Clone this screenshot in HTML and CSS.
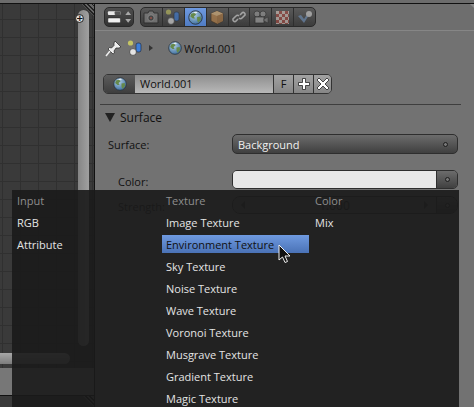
FILE: index.html
```html
<!DOCTYPE html>
<html lang="en">
<head>
	<meta charset="UTF-8">
	<title>World nodes</title>
	<link rel="stylesheet" href="styles.css">
</head>
<body>
	<svg class="defs" width="0" height="0">
		<defs>
			<radialGradient id="sea" cx="40%" cy="30%" r="75%">
				<stop offset="0" stop-color="#b4d0e4"/>
				<stop offset="1" stop-color="#3a6c9e"/>
			</radialGradient>
			<symbol id="globe" viewBox="0 0 14 14">
				<circle cx="7" cy="7" r="6.3" fill="url(#sea)" stroke="#2a323a" stroke-width=".8"/>
				<path d="M3 3.500 6.500 2.500 7.500 4.500 5.500 6 6.500 8 4.500 8 2.200 6ZM8.500 6.500 11.800 6 12 9 9.500 12 8.500 9.500Z" fill="#66894a"/>
				<path d="M5 2.200 8 1.600 9 2.600 6.500 3.200Z" fill="#e8eef2"/>
			</symbol>
			<symbol id="scene" viewBox="0 0 16 16">
				<circle cx="3.500" cy="3" r="2.600" fill="#d8d860" opacity=".8"/>
				<rect x="9" y="3" width="5" height="9" rx="2" fill="#3f7fd8" stroke="#16243a" stroke-width=".6"/>
				<circle cx="6" cy="12" r="3.400" fill="#e4e4e4" stroke="#222" stroke-width=".6"/>
			</symbol>
		</defs>
	</svg>

	<div class="top-strip"></div>

	<div class="main">
		<div class="node-editor">
			<div class="grid"></div>
			<div class="hatch"></div>
			<div class="add-btn">+</div>
			<div class="v-scroll"></div>
			<div class="h-scroll"></div>
			<div class="bottom-bar"></div>
			<div class="hatch-bottom"></div>
		</div>

		<div class="props">
			<div class="hatch-small"></div>
			<div class="tabs-bar">
				<div class="editor-switch">
					<svg width="29" height="18" viewBox="0 0 29 18">
						<rect x="3" y="3" width="13" height="4" rx="1" fill="#e8e8e8"/>
						<rect x="10" y="3" width="6" height="4" rx="1" fill="#555"/>
						<rect x="3" y="10" width="13" height="5" rx="1" fill="#f0f0f0" stroke="#222" stroke-width=".5"/>
						<path d="M21 7 24 3 27 7ZM21 11 24 15 27 11Z" fill="#a8a8a8"/>
					</svg>
				</div>
				<div class="tabs">
					<div class="tab">
						<svg width="16" height="14" viewBox="0 0 16 14">
							<path d="M1 3H5L6 1H10L11 3H15V13H1Z" fill="#8a8a8a" stroke="#222"/>
							<circle cx="8" cy="8" r="3.200" fill="#444" stroke="#bbb" stroke-width=".8"/>
							<circle cx="8" cy="8" r="1" fill="#c85a4a"/>
						</svg>
					</div>
					<div class="tab"><svg width="16" height="16"><use href="#scene"/></svg></div>
					<div class="tab tab-active"><svg width="15" height="15"><use href="#globe"/></svg></div>
					<div class="tab">
						<svg width="14" height="15" viewBox="0 0 14 15">
							<path d="M7 1 13 3.500V11L7 14 1 11V3.500Z" fill="#c48a4c" stroke="#3a2a18" stroke-width=".7"/>
							<path d="M1 3.500 7 6 13 3.500 7 1Z" fill="#e6bc84"/>
							<path d="M7 6V14L13 11V3.500Z" fill="#b07a42"/>
						</svg>
					</div>
					<div class="tab">
						<svg width="16" height="14" viewBox="0 0 16 14" fill="none">
							<path d="M7 9 4.500 11.500A2 2 0 0 1 2 9L5 6A2 2 0 0 1 8 6M9 5 11.500 2.500A2 2 0 0 1 14 5L11 8A2 2 0 0 1 8 8" stroke="#d8d8d8" stroke-width="1.600"/>
						</svg>
					</div>
					<div class="tab">
						<svg width="17" height="15" viewBox="0 0 17 15">
							<circle cx="5" cy="4" r="3" fill="#999" stroke="#222" stroke-width=".7"/>
							<circle cx="11" cy="4" r="3" fill="#999" stroke="#222" stroke-width=".7"/>
							<rect x="3" y="7" width="9" height="6" fill="#aaa" stroke="#222" stroke-width=".7"/>
							<path d="M12 9 16 7V13L12 11Z" fill="#888" stroke="#222" stroke-width=".5"/>
						</svg>
					</div>
					<div class="tab"><div class="checker"></div></div>
					<div class="tab">
						<svg width="16" height="15" viewBox="0 0 16 15">
							<path d="M1 6 4 5 7 9 11 3 12 5 7 13Z" fill="#6f90b8"/>
							<circle cx="12" cy="4" r="3" fill="#d0d0d0"/>
						</svg>
					</div>
				</div>
			</div>

			<div class="context">
				<svg width="17" height="17" viewBox="0 0 17 17">
					<path d="M10 1 16 7 14 8 11 8 9 11 9.500 13 8 14 3 9 4.500 7.500 6.500 8 9 5.500 9 3Z" fill="#eee" stroke="#222" stroke-width=".7"/>
					<path d="M5 11 1 16" stroke="#eee" stroke-width="1.500"/>
				</svg>
				<svg class="scene-icon" width="16" height="16"><use href="#scene"/></svg>
				<span class="crumb-arrow"></span>
				<svg class="crumb-globe" width="14" height="14"><use href="#globe"/></svg>
				<span class="crumb-text">World.001</span>
			</div>

			<div class="datablock">
				<div class="db-icon"><svg width="14" height="14"><use href="#globe"/></svg></div>
				<div class="db-name">World.001</div>
				<div class="db-btn">F</div>
				<div class="db-btn db-sign">
					<svg width="14" height="14" viewBox="0 0 14 14"><path d="M5.500 1.500H8.500V5.500H12.500V8.500H8.500V12.500H5.500V8.500H1.500V5.500H5.500Z" fill="#fff" stroke="#222" stroke-width=".8"/></svg>
				</div>
				<div class="db-btn db-sign db-last">
					<svg width="14" height="14" viewBox="0 0 14 14"><path d="M3 1 7 5 11 1 13 3 9 7 13 11 11 13 7 9 3 13 1 11 5 7 1 3Z" fill="#fff" stroke="#222" stroke-width=".8"/></svg>
				</div>
			</div>

			<div class="panel-line"></div>

			<div class="panel-head">
				<span class="panel-arrow"></span>
				<span>Surface</span>
			</div>

			<div class="row row-surface">
				<div class="label">Surface:</div>
				<div class="dropdown">
					<span>Background</span>
					<span class="socket"></span>
				</div>
			</div>

			<div class="row row-color">
				<div class="label label-in">Color:</div>
				<div class="color-field">
					<div class="swatch"></div>
					<div class="swatch-btn"><span class="socket"></span></div>
				</div>
			</div>

			<div class="row row-strength">
				<div class="label label-in">Strength:</div>
				<div class="color-field slider-field">
					<div class="slider">
						<span class="slider-arrow"></span>
						<span>1.000</span>
						<span class="slider-arrow slider-arrow-r"></span>
					</div>
					<div class="swatch-btn"><span class="socket"></span></div>
				</div>
			</div>
		</div>
	</div>

	<div class="menu">
		<ul class="menu-col">
			<li class="menu-title">Input</li>
			<li>RGB</li>
			<li>Attribute</li>
		</ul>
		<ul class="menu-col">
			<li class="menu-title">Texture</li>
			<li>Image Texture</li>
			<li class="menu-on">Environment Texture</li>
			<li>Sky Texture</li>
			<li>Noise Texture</li>
			<li>Wave Texture</li>
			<li>Voronoi Texture</li>
			<li>Musgrave Texture</li>
			<li>Gradient Texture</li>
			<li>Magic Texture</li>
		</ul>
		<ul class="menu-col">
			<li class="menu-title">Color</li>
			<li>Mix</li>
		</ul>
	</div>

	<svg class="cursor" width="14" height="20" viewBox="0 0 14 20">
		<path d="M1 1V16L4.500 13 7 18.500 9.500 17.500 7 12H12Z" fill="#111" stroke="#eee" stroke-width="1"/>
	</svg>
</body>
</html>
```

FILE: styles.css
```css
*{
	margin: 0;
	padding: 0;
	box-sizing: border-box;
}
html, body{
	width: 474px;
	height: 407px;
	overflow: hidden;
}
body{
	position: relative;
	background: #727272;
	font-family: "Open Sans", "Noto Sans", sans-serif;
	font-size: 11px;
	color: #111;
}
ul{
	list-style-type: none;
}
.defs{
	position: absolute;
}

.top-strip{
	height: 4px;
	background: #6c6c6c;
	border-bottom: 1px solid #111;
}
.main{
	display: flex;
	height: 403px;
}

/* node editor on the left */
.node-editor{
	position: relative;
	width: 95px;
	display: flex;
	flex-direction: column;
	background: #3a3a3a;
	border-right: 1px solid #111;
}
.grid{
	flex: 1;
	background-image:
		linear-gradient(#303030 1px, transparent 1px),
		linear-gradient(90deg, #303030 1px, transparent 1px);
	background-size: 18px 18px;
	background-position: 2px 15px;
}
.bottom-bar{
	height: 28px;
	margin-bottom: 11px;
	background: #777;
	border-bottom: 1px solid #111;
}
.hatch{
	position: absolute;
	right: 0;
	top: 0;
	width: 12px;
	height: 12px;
	background: repeating-linear-gradient(45deg, #222 0 1px, #666 1px 3px);
	clip-path: polygon(0 0, 100% 0, 100% 100%);
}
.hatch-bottom{
	position: absolute;
	right: 0;
	bottom: 0;
	width: 11px;
	height: 11px;
	background: repeating-linear-gradient(45deg, #111 0 1px, #666 1px 3px);
	clip-path: polygon(0 0, 100% 0, 100% 100%);
}
.v-scroll{
	position: absolute;
	left: 78px;
	top: 6px;
	width: 11px;
	height: 336px;
	border-radius: 6px;
	background: linear-gradient(90deg, #858585, #a0a0a0);
}
.h-scroll{
	position: absolute;
	left: -10px;
	top: 349px;
	width: 80px;
	height: 11px;
	border-radius: 6px;
	background: linear-gradient(#a8a8a8, #7c7c7c);
}
.add-btn{
	position: absolute;
	left: 75px;
	top: 10px;
	width: 9px;
	height: 9px;
	border-radius: 50%;
	background: #ddd;
	border: 1px solid #222;
	z-index: 1;
	font: bold 9px/7px "DejaVu Sans", sans-serif;
	text-align: center;
	color: #111;
}

/* properties editor */
.props{
	position: relative;
	flex: 1;
	background: #727272;
}
.hatch-small{
	position: absolute;
	right: 0;
	top: 0;
	width: 4px;
	height: 4px;
	background: #8a8a8a;
	clip-path: polygon(0 0, 100% 100%, 100% 0);
}
.tabs-bar{
	display: flex;
	height: 27px;
	padding: 3px 0 0 9px;
	background: #6e6e6e;
	border-bottom: 1px solid #868686;
}
.editor-switch{
	width: 30px;
	height: 20px;
	border-radius: 5px;
	background: linear-gradient(#4e4e4e, #333);
	border: 1px solid #2a2a2a;
	display: flex;
}
.tabs{
	display: flex;
	width: 176px;
	margin-left: 6px;
	height: 20px;
	border: 1px solid #2a2a2a;
	border-radius: 5px;
	background: linear-gradient(#5a5a5a, #3c3c3c);
	overflow: hidden;
}
.tab{
	flex: 1;
	display: flex;
	align-items: center;
	justify-content: center;
	border-right: 1px solid #2e2e2e;
}
.tab:last-child{
	border-right: 0;
}
.tab svg, .checker{
	opacity: .62;
}
.tab-active{
	background: linear-gradient(#6f9ae0, #4f7cc4);
}
.tab-active svg{
	opacity: 1;
}
.checker{
	width: 13px;
	height: 13px;
	background: repeating-conic-gradient(#a84a42 0 25%, #d8c8c0 0 50%) 0 0 / 6px 6px;
}

.context{
	display: flex;
	align-items: center;
	height: 34px;
	padding-left: 10px;
}
.scene-icon{
	margin-left: 5px;
}
.crumb-arrow{
	width: 0;
	height: 0;
	margin-left: 6px;
	border-left: 4px solid #333;
	border-top: 3px solid transparent;
	border-bottom: 3px solid transparent;
}
.crumb-globe{
	margin-left: 15px;
}
.crumb-text{
	margin-left: 2px;
}

.datablock{
	display: flex;
	height: 20px;
	width: 229px;
	margin: 9px 0 0 8px;
	border: 1px solid #333;
	border-radius: 5px;
	overflow: hidden;
}
.db-icon{
	width: 31px;
	display: flex;
	align-items: center;
	justify-content: center;
	background: linear-gradient(#5c5c5c, #3e3e3e);
}
.db-name{
	width: 138px;
	padding-left: 5px;
	line-height: 18px;
	background: linear-gradient(#8e8e8e, #b8b8b8);
}
.db-btn{
	width: 20px;
	text-align: center;
	line-height: 18px;
	border-left: 1px solid #333;
	background: linear-gradient(#a2a2a2, #868686);
}
.db-sign{
	display: flex;
	align-items: center;
	justify-content: center;
}
.db-last{
	flex: 1;
}

.panel-line{
	height: 1px;
	width: 361px;
	margin: 10px 0 0 5px;
	background: #3e3e3e;
}
.panel-head{
	display: flex;
	align-items: center;
	height: 24px;
	padding-left: 10px;
	font-size: 12px;
}
.panel-arrow{
	width: 0;
	height: 0;
	margin-right: 5px;
	border-top: 9px solid #222;
	border-left: 5px solid transparent;
	border-right: 5px solid transparent;
}

.row{
	display: grid;
	grid-template-columns: 124px 226px;
	align-items: center;
	padding-left: 13px;
}
.row-surface{
	height: 20px;
	margin-top: 5px;
}
.row-color{
	height: 19px;
	margin-top: 16px;
}
.row-color .label{
	padding-top: 4px;
}
.row-strength{
	height: 18px;
	margin-top: 7px;
}
.row-strength .label{
	padding-top: 2px;
}
.label-in{
	padding-left: 10px;
}
.socket{
	width: 5px;
	height: 5px;
	border-radius: 50%;
	background: #777;
	border: 1px solid #1c1c1c;
}
.dropdown{
	display: flex;
	align-items: center;
	justify-content: space-between;
	height: 20px;
	padding: 0 9px 0 5px;
	border: 1px solid #2e2e2e;
	border-radius: 5px;
	background: linear-gradient(#6c6c6c, #3f3f3f);
	color: #f0f0f0;
}
.color-field{
	display: flex;
	height: 19px;
	border: 1px solid #2e2e2e;
	border-radius: 5px;
	overflow: hidden;
}
.swatch{
	flex: 1;
	background: #e8e8e8;
}
.swatch-btn{
	width: 21px;
	display: flex;
	align-items: center;
	justify-content: center;
	border-left: 1px solid #2e2e2e;
	background: linear-gradient(#6c6c6c, #404040);
}
.slider-field{
	height: 18px;
	border-radius: 8px;
}
.slider{
	flex: 1;
	display: flex;
	align-items: center;
	justify-content: space-between;
	padding: 0 8px;
	background: #606060;
	font-size: 12px;
}
.slider-arrow{
	width: 0;
	height: 0;
	border-right: 4px solid #333;
	border-top: 4px solid transparent;
	border-bottom: 4px solid transparent;
}
.slider-arrow-r{
	border-right: 0;
	border-left: 4px solid #333;
}

/* add-node popup, sits over both editors */
.menu{
	position: absolute;
	left: 12px;
	top: 190px;
	width: 447px;
	height: 230px;
	display: flex;
	gap: 2px;
	padding: 1px 0 0 1px;
	background: rgba(26, 26, 26, .91);
	color: #e4e4e4;
}
.menu-col{
	width: 147px;
}
.menu-col li{
	height: 18px;
	margin-bottom: 4px;
	padding-left: 4px;
	line-height: 20px;
}
.menu-col .menu-title{
	color: #8e8e8e;
}
.menu-col .menu-on{
	background: linear-gradient(#6f9ae0, #4a72b6);
	color: #111;
}
.cursor{
	position: absolute;
	left: 278px;
	top: 244px;
}
```
